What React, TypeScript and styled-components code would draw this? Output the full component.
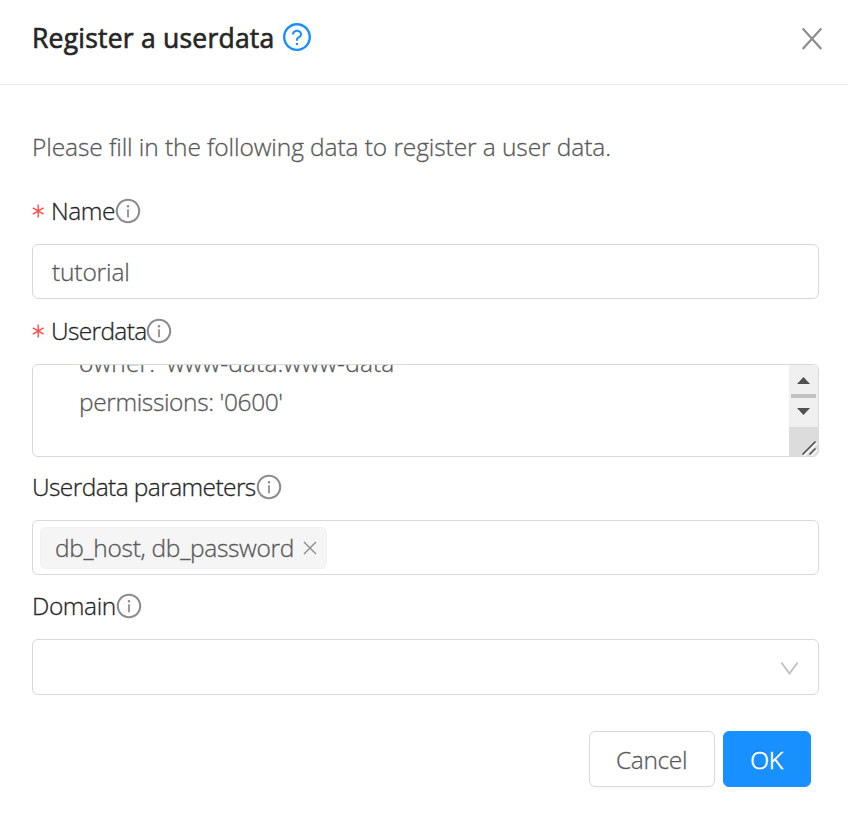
import React from 'react';
import styled, { createGlobalStyle } from 'styled-components';
import { AiOutlineInfoCircle, AiOutlineQuestionCircle } from 'react-icons/ai';

const GlobalStyle = createGlobalStyle`
  * { box-sizing: border-box; }
  body {
    margin: 0;
    background: #fff;
    color: #595959;
    font: 300 24.5px/36px 'Open Sans', 'Noto Sans', sans-serif;
    -webkit-text-stroke: 0.3px currentColor;
  }
`;

const Modal = styled.section`
  width: 848px;
  height: 817px;
  overflow: hidden;
`;

const Header = styled.header`
  display: flex;
  align-items: center;
  height: 85px;
  padding: 0 24px 8px 32px;
  border-bottom: 1px solid #ececec;
`;

const Title = styled.h1`
  display: flex;
  margin: 0;
  flex: 1;
  align-items: center;
  gap: 7px;
  color: #262626;
  font-size: 26.5px;
  font-weight: 400;
  line-height: 40px;
  -webkit-text-stroke: 0.65px currentColor;

  svg { width: 32px; height: 32px; color: #1890ff; margin-top: -3px; }
`;

const Tracked = styled.span<{ $spacing: number }>`
  letter-spacing: ${({ $spacing }) => $spacing}px;
  white-space: pre;
`;

const IconButton = styled.button`
  display: flex;
  padding: 0;
  border: 0;
  background: none;
  color: #8c8c8c;
`;

const Form = styled.form`
  padding: 44px 29px 0 32px;
`;

const Intro = styled.p`
  margin: 0 0 27px;
`;

const Label = styled.label`
  display: flex;
  align-items: center;
  height: 38px;
  margin-bottom: 14px;
  color: #262626;

  > svg { width: 28px; height: 28px; margin-left: -1px; color: #8c8c8c; }
`;

const Star = styled.svg`
  && { width: 13px; height: 14px; margin: 0 6px 0 0; color: #ff4d4f; }
`;

const Control = styled.div<{ $height: number; $gap: number; $inset: number }>`
  display: flex;
  align-items: center;
  height: ${({ $height }) => $height}px;
  margin-bottom: ${({ $gap }) => $gap}px;
  padding-left: ${({ $inset }) => $inset}px;
  border: 1px solid #d9d9d9;
  border-radius: 6px;
  overflow: hidden;
`;

const Code = styled.div`
  display: flex;
  flex: 1;
  height: 100%;
  flex-direction: column;
  justify-content: flex-end;
  padding-bottom: 35px;
  line-height: 39px;
`;

const ScrollColumn = styled.div`
  display: flex;
  flex-direction: column;
  width: 29px;
  height: 100%;
  background: #f0f0f0;
`;

const Tag = styled.span`
  display: flex;
  align-items: center;
  width: 287px;
  height: 42px;
  padding-left: 14px;
  border: 1px solid #f0f0f0;
  border-radius: 6px;
  background: #f5f5f5;

  svg { flex: none; margin-left: auto; margin-right: 9px; }
`;

const Chevron = styled.svg`
  margin-left: auto;
  margin-right: 19px;
  margin-top: 2px;
`;

const Footer = styled.footer`
  display: flex;
  justify-content: flex-end;
  gap: 8px;
  padding: 36px 37px 0 0;
`;

const Button = styled.button<{ $primary?: boolean }>`
  width: ${({ $primary }) => ($primary ? 88 : 126)}px;
  height: 56px;
  padding: 1px 1px 0 0;
  border: 1px solid ${({ $primary }) => ($primary ? '#1890ff' : '#d9d9d9')};
  border-radius: 6px;
  background: ${({ $primary }) => ($primary ? '#1890ff' : '#fff')};
  color: ${({ $primary }) => ($primary ? '#fff' : '#595959')};
  font: inherit;
  -webkit-text-stroke: ${({ $primary }) => ($primary ? 0.6 : 0.3)}px currentColor;
  box-shadow: 0 3px 0 rgba(0, 0, 0, 0.02);
  text-shadow: ${({ $primary }) => ($primary ? '0 -2px 0 rgba(0, 0, 0, 0.12)' : 'none')};
`;

const RequiredMark = () => (
  <Star viewBox="0 0 13 14" fill="none" stroke="currentColor" strokeWidth="1.4">
    <path d="M6.2 .5v13M.8 3.8l10.8 6.4M11.6 3.8L.8 10.2" />
  </Star>
);

function FieldLabel({ text, spacing, required }: { text: string; spacing: number; required?: boolean }) {
  return (
    <Label>
      {required && <RequiredMark />}
      <Tracked $spacing={spacing}>{text}</Tracked>
      <AiOutlineInfoCircle />
    </Label>
  );
}

const Scrollbar = () => (
  <ScrollColumn>
    <svg width="29" height="91" viewBox="0 0 29 91">
      <path fill="#505050" d="M8 19L14.5 12L21 19zM8 43L14.5 50L21 43z" />
      <path fill="#c1c1c1" d="M2 29h25v4H2z" />
      <path fill="#dcdcdc" d="M0 62h29v29H0z" />
      <path stroke="#fff" strokeWidth="1.5" d="M15 91L28 78M22 91L28 85" />
      <path stroke="#505050" strokeWidth="1.6" d="M13.5 89.5L26.5 76.5M20.5 89.5L26.5 83.5" />
    </svg>
  </ScrollColumn>
);

export default function App() {
  return (
    <Modal>
      <GlobalStyle />
      <Header>
        <Title>
          <Tracked $spacing={0.22}>Register a userdata</Tracked>
          <AiOutlineQuestionCircle />
        </Title>
        <IconButton aria-label="Close">
          <svg width="24" height="24" viewBox="0 0 24 24" fill="none" stroke="currentColor" strokeWidth="2.2">
            <path d="M2.7 2.5L21.3 23M21.3 2.5L2.7 23" />
          </svg>
        </IconButton>
      </Header>
      <Form>
        <Intro>
          <Tracked $spacing={-0.09}>Please fill in the following data to register a user data.</Tracked>
        </Intro>
        <FieldLabel text="Name" spacing={-0.4} required />
        <Control $height={55} $gap={13} $inset={19}>
          <Tracked $spacing={-0.15}>tutorial</Tracked>
        </Control>
        <FieldLabel text="Userdata" spacing={-0.66} required />
        <Control $height={93} $gap={11} $inset={46}>
          <Code>
            <Tracked $spacing={0.15}>{"owner: 'www-data:www-data'"}</Tracked>
            <Tracked $spacing={-0.38}>{"permissions: '0600'"}</Tracked>
          </Code>
          <Scrollbar />
        </Control>
        <FieldLabel text="Userdata parameters" spacing={-0.59} />
        <Control $height={55} $gap={12} $inset={7}>
          <Tag>
            <Tracked $spacing={-0.3}>db_host, db_password</Tracked>
            <svg width="14" height="14" viewBox="0 0 14 14" fill="none" stroke="#8c8c8c" strokeWidth="1.4">
              <path d="M1 1L13 13M13 1L1 13" />
            </svg>
          </Tag>
        </Control>
        <FieldLabel text="Domain" spacing={-0.4} />
        <Control $height={56} $gap={0} $inset={0}>
          <Chevron width="20" height="16" viewBox="0 0 20 16" fill="none" stroke="#bfbfbf" strokeWidth="1.8">
            <path d="M2.3 2.5L10.5 13.5L18.7 2.5" />
          </Chevron>
        </Control>
      </Form>
      <Footer>
        <Button><Tracked $spacing={-0.35}>Cancel</Tracked></Button>
        <Button $primary><Tracked $spacing={-0.2}>OK</Tracked></Button>
      </Footer>
    </Modal>
  );
}
